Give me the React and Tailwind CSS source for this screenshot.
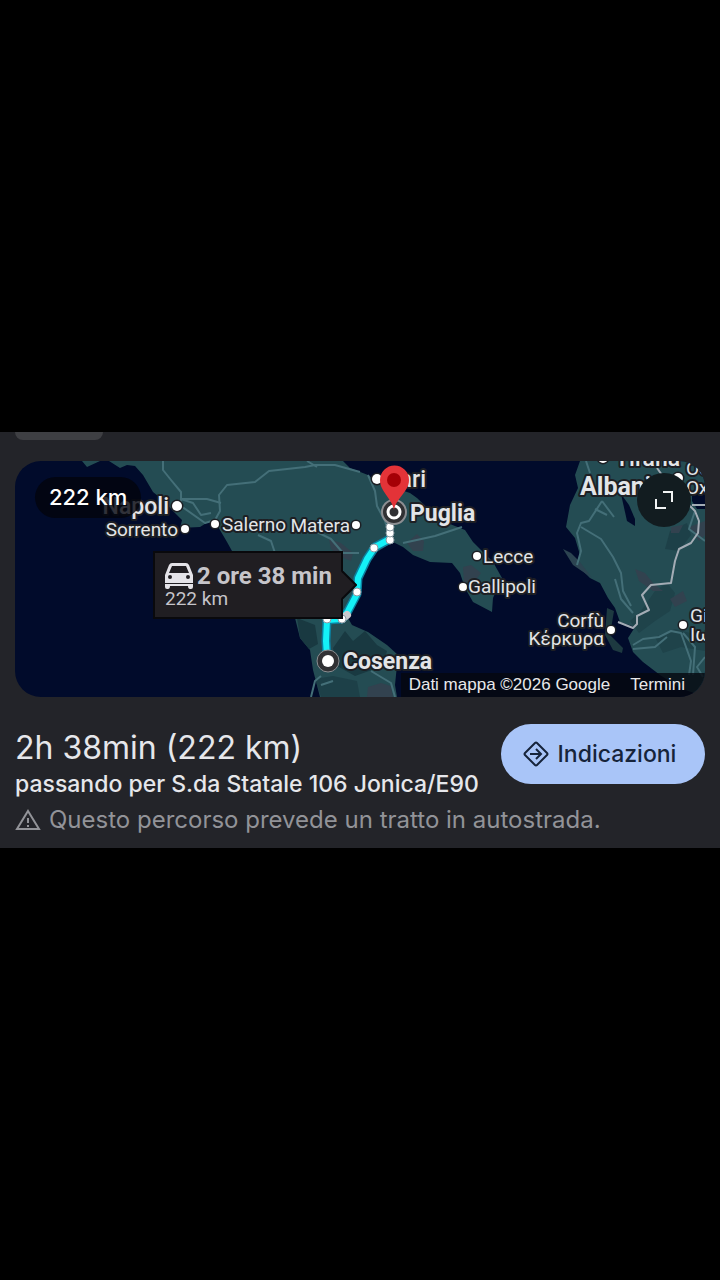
const places = [
  { name: 'Napoli', x: 154, y: 53, anchor: 'end', size: 'md', dot: [162, 45] },
  { name: 'Sorrento', x: 163, y: 75, anchor: 'end', size: 'sm', dot: [170, 68] },
  { name: 'Salerno', x: 207, y: 70, anchor: 'start', size: 'sm', dot: [200, 63] },
  { name: 'Matera', x: 335, y: 71, anchor: 'end', size: 'sm', dot: [341, 64] },
  { name: 'Bari', x: 411, y: 26, anchor: 'end', size: 'md', dot: [362, 18] },
  { name: 'Puglia', x: 395, y: 60, anchor: 'start', size: 'lg' },
  { name: 'Cosenza', x: 328, y: 208, anchor: 'start', size: 'lg' },
  { name: 'Lecce', x: 468, y: 102, anchor: 'start', size: 'sm', dot: [462, 95] },
  { name: 'Gallipoli', x: 453, y: 132, anchor: 'start', size: 'sm', dot: [448, 126] },
  { name: 'Corfù', x: 589, y: 166, anchor: 'end', size: 'sm', dot: [596, 169] },
  { name: 'Κέρκυρα', x: 589, y: 184, anchor: 'end', size: 'sm' },
  { name: 'Tirana', x: 600, y: 5, anchor: 'start', size: 'md', dot: [588, -3] },
  { name: 'Albania', x: 565, y: 34, anchor: 'start', size: 'xl', dot: [663, 17] },
  { name: 'Ocrida', x: 671, y: 14, anchor: 'start', size: 'sm' },
  { name: 'Охрид', x: 671, y: 33, anchor: 'start', size: 'sm' },
  { name: 'Giannina', x: 675, y: 161, anchor: 'start', size: 'sm', dot: [668, 164] },
  { name: 'Ιωάννινα', x: 675, y: 180, anchor: 'start', size: 'sm' },
];

const labelSizes = {
  sm: 'text-[19px] font-normal',
  md: 'text-[23px] font-medium',
  lg: 'text-[23px] font-bold',
  xl: 'text-[25px] font-bold',
};

const stops = [[312, 158], [327, 158], [342, 131], [359, 87], [375, 79], [375, 72], [375, 66]];

function RouteMap() {
  return (
    <svg viewBox="0 0 690 236" preserveAspectRatio="xMidYMid slice" className="block w-full h-full bg-[#010b2b]" role="img" aria-label="Mappa del percorso da Cosenza alla Puglia">
      {/* land */}
      <g fill="#244c53">
        <path d="M67 0L72 6L85 0H94L105 7L112 4L120 5L128 14L138 31L148 39L158 50L167 59L165 67L185 66L193 61L202 64L212 81L217 90L240 125L280 157L285 177L295 189L298 209L305 236H382L380 224L383 194L372 184L353 171L337 164L333 157L337 149L345 132L342 124L348 111L362 91L378 81L388 86L398 94L415 101L437 102L445 112L450 127L458 141L477 151L478 137L487 117L478 101L458 81L450 69L425 59L402 37L395 32L362 21L353 14L335 7L328 0Z" />
        <path d="M565 0L560 14L563 27L555 44L551 66L560 77L565 94L562 104L575 117L585 122L593 137L600 147L605 161L620 166L613 177L618 191L628 201L645 214L665 227L690 236V0Z" />
        <path d="M592 147L599 150L597 162L595 174L608 187L607 192L598 189L590 174Z" fill="#1d3940" />
        <path d="M548 88L558 104L577 117L565 101L556 92Z" fill="#2c4451" />
      </g>
      {/* forests and hills */}
      <g fill="#193941">
        <path d="M282 157L300 164L303 183L294 188L285 177Z" />
        <path d="M318 187L330 170L338 180L350 170L362 184L372 190L368 205L340 215L322 205Z" />
        <path d="M300 218L318 215L342 220L345 236H306Z" opacity="0.6" />
        <path d="M615 160L626 150L640 130L652 122L660 132L655 150L640 160L624 172Z" opacity="0.5" />
        <path d="M655 70L672 62L676 74L664 90L650 88Z" opacity="0.6" />
        <path d="M640 176L660 168L690 176V190L666 186L648 192Z" opacity="0.5" />
      </g>
      <g fill="#32424f">
        <path d="M314 78L326 82L338 92L336 100L326 96L316 88Z" />
        <path d="M392 82L402 73L409 80L408 90L398 90Z" />
        <path d="M448 106L456 104L466 112L460 120L449 122Z" />
        <path d="M353 226L366 222L376 225L378 236H352Z" />
        <path d="M620 108L630 112L638 122L648 130L638 130L624 120Z" />
        <path d="M655 138L668 130L672 140L660 146Z" />
        <path d="M656 66L668 64L664 72L656 72ZM674 66L690 60V74L684 80Z" />
      </g>
      <g fill="#010b2b">
        <path d="M606 33L614 44L620 58V65L612 60Z" />
        <path d="M677 30L690 26V48H682L677 40Z" />
      </g>
      {/* roads and borders */}
      <g fill="none" stroke="#446f78" strokeWidth="2" strokeLinejoin="round">
        <path d="M148 0V9L156 19L166 31V45L190 62L200 59L205 50L204 34L212 24L240 21L254 10L290 6L300 4L320 4L345 11" />
        <path d="M166 38L178 42L186 54L196 52M165 38L192 38L206 42" />
        <path d="M292 0L302 6M243 74L256 80L260 92M300 70L316 78L328 92L344 92" />
        <path d="M353 14L360 30L362 45L370 60L376 80M388 82L420 75L447 66" />
        <path d="M306 215L300 220L296 236M318 220L306 224M356 210L376 222L380 236" />
        <path d="M571 0L575 12M587 40L574 60L566 62L562 72L566 90L562 104M587 40L599 56M580 48L592 54M566 66L586 78L598 96L606 112L608 130L616 145M600 118L606 138L618 152M645 60L650 46M680 50L674 68L690 80" />
        <path d="M618 184L628 178L644 176L656 170L666 172L676 200L674 214M618 188L640 186L652 176M690 196L682 206L688 216M668 172L680 186L678 214" />
      </g>
      <path d="M642 7L647 14M674 44L680 50L684 60L683 72L676 82L664 88L660 100L656 122L636 124L627 134L634 149L622 155L622 163L618 167L603 161M677 44H690" fill="none" stroke="#a3acb5" strokeWidth="2" strokeLinejoin="round" />

      {/* route */}
      <path d="M312 196L311 180L312 159L327 158L333 150L342 133L343 117L352 98L360 86L375 78" fill="none" stroke="#0b7f9e" strokeWidth="9" strokeLinejoin="round" />
      <path d="M312 196L311 180L312 159L327 158L333 150L342 133L343 117L352 98L360 86L375 78" fill="none" stroke="#14f1f7" strokeWidth="6" strokeLinejoin="round" />
      <path d="M327 158L332 154" stroke="#c9cace" strokeWidth="8" strokeLinecap="round" />
      {stops.map(([cx, cy]) => (
        <circle key={`${cx}-${cy}`} cx={cx} cy={cy} r="4" fill="#ffffff" stroke="#8c9aa3" strokeWidth="1" />
      ))}

      <g className="font-['Roboto',sans-serif]" fill="#e3e5e8" stroke="#1d1f24" strokeWidth="4" strokeLinejoin="round" paintOrder="stroke">
        {places.map(place => (
          <g key={place.name}>
            {place.dot && <circle cx={place.dot[0]} cy={place.dot[1]} r={place.size === 'sm' ? 4 : 5} strokeWidth="3" fill="#ffffff" />}
            <text x={place.x} y={place.y} textAnchor={place.anchor} className={labelSizes[place.size]}>{place.name}</text>
          </g>
        ))}
      </g>

      {/* start and destination */}
      <circle cx="313" cy="200" r="11" fill="#303033" stroke="#8c8e92" strokeWidth="1" />
      <circle cx="313" cy="200" r="6" fill="#ffffff" />
      <circle cx="379" cy="51" r="12" fill="#303033" stroke="#8c8e92" strokeWidth="2" />
      <circle cx="379" cy="51" r="6" fill="none" stroke="#ffffff" strokeWidth="3" />
      <path d="M379 49C377 37 365 31 365 19A14 14 0 0 1 394 19C394 31 381 37 379 49Z" fill="#e33338" />
      <circle cx="379" cy="19" r="7" fill="#a50006" />
    </svg>
  );
}

function RouteCallout() {
  return (
    <div className="absolute left-[20%] top-[38%] w-[190px] border-2 border-[#09090c] bg-[#201e22] pl-2.5 pt-2.5 pb-2 font-['Roboto',sans-serif] text-[#c6c5ca]">
      <div className="flex items-center gap-1 text-2xl leading-6 font-bold whitespace-nowrap">
        <svg viewBox="0 0 28 26" className="w-7 h-[26px] shrink-0" fill="#e4e3e8" aria-hidden="true">
          <path fillRule="evenodd" d="M7 0H21Q23 0 24 2L28 12V20H0V12L4 2Q5 0 7 0ZM7 3L4 10H24L21 3ZM5 12A2 2 0 0 0 5 16A2 2 0 0 0 5 12ZM23 12A2 2 0 0 0 23 16A2 2 0 0 0 23 12Z" />
          <path d="M0 21H28V24Q28 26 26 26H25Q23 26 23 23H5Q5 26 3 26H2Q0 26 0 24Z" />
        </svg>
        2 ore 38 min
      </div>
      <p className="text-[19px] leading-5">222 km</p>
      <svg viewBox="0 0 16 28" className="absolute -right-4 top-[18px] w-4 h-7" aria-hidden="true">
        <path d="M0 0L15 14L0 28Z" fill="#201e22" />
        <path d="M1 0L15 14L1 28" fill="none" stroke="#09090c" strokeWidth="2" />
      </svg>
    </div>
  );
}

export default function App() {
  return (
    <div className="min-h-screen bg-black flex flex-col justify-center">
      <main className="bg-[#232429] px-[15px] pb-3 font-['Inter','Liberation_Sans',sans-serif] text-[#e6e7eb]">
        <div className="h-2 w-[88px] rounded-b-xl bg-[#3e3f43]" />

        <div className="relative mt-[21px] aspect-[690/236] rounded-[26px] overflow-hidden">
          <RouteMap />
          <span className="absolute left-5 top-4 h-[41px] px-3.5 flex items-center rounded-full bg-[#02040c]/80 text-[22px] font-medium text-white whitespace-nowrap">
            222 km
          </span>
          <RouteCallout />
          <button aria-label="Espandi mappa" className="absolute right-3.5 top-3 size-[54px] rounded-full bg-[#121c20] flex items-center justify-center">
            <svg viewBox="0 0 20 20" className="size-5" fill="none" stroke="#f1f3f4" strokeWidth="2" aria-hidden="true">
              <path d="M9 2H18V12M2 9V18H12" />
            </svg>
          </button>
          <div className="absolute right-0 bottom-0 h-6 pl-2 pr-5 flex items-center gap-5 bg-[#05070f]/80 font-['Liberation_Sans',sans-serif] text-[17px] text-[#e8e8ea] whitespace-nowrap">
            <span>Dati mappa ©2026 Google</span>
            <a href="#termini">Termini</a>
          </div>
        </div>

        <div className="mt-[27px] flex items-start justify-between gap-4">
          <div className="whitespace-nowrap">
            <h1 className="mt-1.5 text-[32px] leading-9">2h 38min (222 km)</h1>
            <p className="mt-0.5 text-[23px] leading-8 font-medium">passando per S.da Statale 106 Jonica/E90</p>
          </div>
          <button className="h-[60px] w-[204px] shrink-0 rounded-full bg-[#a9c5f8] text-[#16243b] flex items-center justify-center gap-2 pr-2 text-[23px] font-medium">
            <svg viewBox="0 0 28 28" className="size-7" fill="none" stroke="currentColor" strokeWidth="2" strokeLinejoin="round" aria-hidden="true">
              <path d="M13 3Q14 2 15 3L25 13Q26 14 25 15L15 25Q14 26 13 25L3 15Q2 14 3 13Z" />
              <path d="M8 14H19M14 9L19 14L14 19" strokeLinejoin="miter" />
            </svg>
            Indicazioni
          </button>
        </div>

        <p className="mt-1 flex items-center gap-2 text-2xl leading-8 text-[#929398]">
          <svg viewBox="0 0 26 24" className="w-[26px] h-6 shrink-0" fill="none" stroke="currentColor" strokeWidth="2" aria-hidden="true">
            <path d="M13 3L24 21H2ZM13 10V15M13 17V19" />
          </svg>
          Questo percorso prevede un tratto in autostrada.
        </p>
      </main>
    </div>
  );
}
